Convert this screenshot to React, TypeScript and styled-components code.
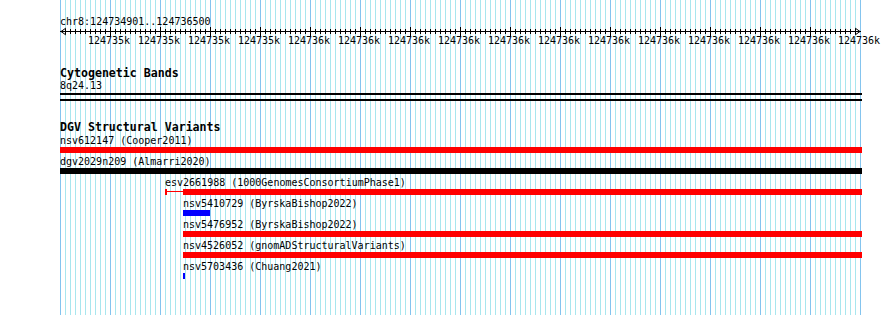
import styled, { createGlobalStyle } from "styled-components";

const VIEW_START = 124734901;
const VIEW_END = 124736500;
const BP_PER_PX = 2;
const PANEL_WIDTH = 802;

type Variant = {
  name: string;
  study: string;
  start: number;
  end: number;
  thickStart?: number;
  color: string;
};

const variants: Variant[] = [
  { name: "nsv612147", study: "Cooper2011", start: 124730000, end: 124740000, color: "#ff0000" },
  { name: "dgv2029n209", study: "Almarri2020", start: 124720000, end: 124750000, color: "#000000" },
  {
    name: "esv2661988",
    study: "1000GenomesConsortiumPhase1",
    start: 124735111,
    thickStart: 124735147,
    end: 124760000,
    color: "#ff0000",
  },
  { name: "nsv5410729", study: "ByrskaBishop2022", start: 124735147, end: 124735201, color: "#0000ff" },
  { name: "nsv5476952", study: "ByrskaBishop2022", start: 124735147, end: 124790000, color: "#ff0000" },
  { name: "nsv4526052", study: "gnomADStructuralVariants", start: 124735147, end: 124800000, color: "#ff0000" },
  { name: "nsv5703436", study: "Chuang2021", start: 124735147, end: 124735151, color: "#0000ff" },
];

const tickLabels = Array.from({ length: 16 }, (_, i) => (i < 4 ? "124735k" : "124736k"));

const toPx = (bp: number) =>
  Math.min(PANEL_WIDTH, Math.max(0, Math.round((bp - VIEW_START) / BP_PER_PX)));

const GlobalStyle = createGlobalStyle`
  html, body {
    margin: 0;
    background: #ffffff;
    color: #000000;
    font-family: "DejaVu Sans Mono", "Liberation Mono", monospace;
  }
`;

const Page = styled.div`
  display: flex;
  min-height: 100vh;
`;

const Gutter = styled.div`
  flex: none;
  width: 60px;
`;

const Panel = styled.div`
  flex: none;
  width: ${PANEL_WIDTH}px;
  min-height: 100vh;
  display: flex;
  flex-direction: column;
  background-image: linear-gradient(to right, #84c4ee 1px, transparent 1px),
    linear-gradient(to right, #a8e6ee 1px, transparent 1px);
  background-size: 50px 100%, 5px 100%;
`;

const LocationLabel = styled.div`
  padding-top: 16px;
  font-size: 10px;
  line-height: 11px;
  height: 11px;
  white-space: nowrap;
`;

const RulerSvg = styled.svg`
  display: block;
  overflow: visible;
`;

const TickRow = styled.div`
  display: flex;
  padding-left: 24px;
  height: 10px;
`;

const TickLabel = styled.div`
  flex: none;
  width: 50px;
  text-align: center;
  font-size: 10px;
  line-height: 9px;
  white-space: nowrap;
`;

const TrackTitle = styled.div<{ $gap: number }>`
  margin-top: ${(props) => props.$gap}px;
  font-size: 11.6px;
  font-weight: bold;
  line-height: 13px;
  height: 13px;
  white-space: nowrap;
`;

const BandLabel = styled.div`
  font-size: 10px;
  line-height: 12px;
  height: 12px;
`;

const Divider = styled.div<{ $gap: number }>`
  margin-top: ${(props) => props.$gap}px;
  height: 2px;
  background: #000000;
`;

const FeatureList = styled.div`
  margin-top: 1px;
  display: flex;
  flex-direction: column;
  gap: 3px;
`;

const FeatureRow = styled.div`
  display: flex;
  flex-direction: column;
`;

const FeatureLabel = styled.div`
  font-size: 10px;
  line-height: 12px;
  height: 12px;
  white-space: nowrap;
`;

const FeatureBar = styled.div`
  display: flex;
  height: 6px;
`;

const ThinPart = styled.div<{ $color: string }>`
  flex: none;
  box-sizing: border-box;
  border-left: 2px solid ${(props) => props.$color};
  background: linear-gradient(${(props) => props.$color}, ${(props) => props.$color}) 0 2px / 100% 1px no-repeat;
`;

const ThickPart = styled.div<{ $color: string }>`
  flex: 1;
  background: ${(props) => props.$color};
`;

const Ruler = () => {
  const ticks = [];
  for (let i = 1; i < 160; i++) {
    const major = i % 10 === 0;
    ticks.push(
      <line
        key={i}
        x1={i * 5 + 0.5}
        x2={i * 5 + 0.5}
        y1={major ? 0 : 2}
        y2={major ? 9 : 7}
        stroke="#000"
        strokeWidth={1}
      />
    );
  }
  return (
    <RulerSvg width={PANEL_WIDTH} height={9} shapeRendering="crispEdges">
      <rect x={0} y={4} width={801} height={1} fill="#000" />
      {ticks}
      <polyline points="6,1 1,4.5 6,8" fill="none" stroke="#000" strokeWidth={1} shapeRendering="auto" />
      <polyline points="795,1 800,4.5 795,8" fill="none" stroke="#000" strokeWidth={1} shapeRendering="auto" />
    </RulerSvg>
  );
};

const Feature = ({ variant }: { variant: Variant }) => {
  const left = toPx(variant.start);
  const right = Math.max(toPx(variant.end), left + 2);
  const thin = variant.thickStart ? toPx(variant.thickStart) - left : 0;

  return (
    <FeatureRow>
      <FeatureLabel style={{ paddingLeft: left }}>
        {variant.name} ({variant.study})
      </FeatureLabel>
      <FeatureBar style={{ marginLeft: left, width: right - left }}>
        {thin > 0 && <ThinPart $color={variant.color} style={{ width: thin }} />}
        <ThickPart $color={variant.color} />
      </FeatureBar>
    </FeatureRow>
  );
};

const App = () => {
  return (
    <>
      <GlobalStyle />
      <Page>
        <Gutter />
        <Panel>
          <LocationLabel>
            chr8:{VIEW_START}..{VIEW_END}
          </LocationLabel>
          <Ruler />
          <TickRow>
            {tickLabels.map((label, i) => (
              <TickLabel key={i}>{label}</TickLabel>
            ))}
          </TickRow>

          <TrackTitle $gap={21}>Cytogenetic Bands</TrackTitle>
          <BandLabel>8q24.13</BandLabel>
          <Divider $gap={1} />
          <Divider $gap={4} />

          <TrackTitle $gap={20}>DGV Structural Variants</TrackTitle>
          <FeatureList>
            {variants.map((v) => (
              <Feature key={v.name} variant={v} />
            ))}
          </FeatureList>
        </Panel>
      </Page>
    </>
  );
};

export default App;
